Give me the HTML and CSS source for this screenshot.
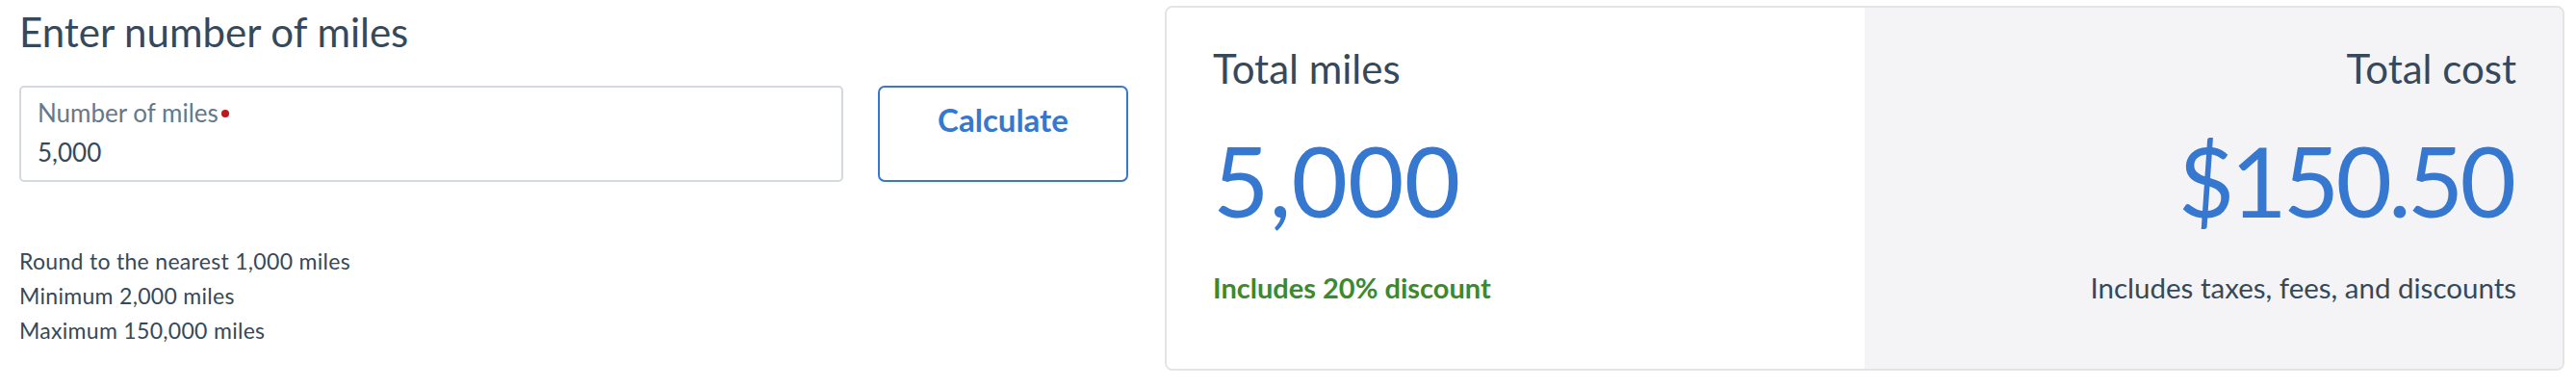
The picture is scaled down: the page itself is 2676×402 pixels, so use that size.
FILE: index.html
```html
<!DOCTYPE html>
<html lang="en">
<head>
<meta charset="utf-8">
<title>Buy miles</title>
<link rel="stylesheet" href="styles.css">
</head>
<body>
<div class="page">
  <section class="entry">
    <h2 class="entry-title">Enter number of miles</h2>
    <div class="entry-row">
      <label class="field">
        <span class="field-label">Number of miles<span class="req-dot"></span></span>
        <span class="field-value">5,000</span>
      </label>
      <button class="calc-btn" type="button">Calculate</button>
    </div>
    <ul class="hints">
      <li>Round to the nearest 1,000 miles</li>
      <li>Minimum 2,000 miles</li>
      <li>Maximum 150,000 miles</li>
    </ul>
  </section>
  <section class="summary">
    <div class="summary-half">
      <div class="summary-title">Total miles</div>
      <div class="summary-value">5,000</div>
      <div class="summary-note discount">Includes 20% discount</div>
    </div>
    <div class="summary-half cost">
      <div class="summary-title">Total cost</div>
      <div class="summary-value price">$150.50</div>
      <div class="summary-note">Includes taxes, fees, and discounts</div>
    </div>
  </section>
</div>
</body>
</html>
```

FILE: styles.css
```css
* { box-sizing: border-box; }
html, body { margin: 0; padding: 0; background: #ffffff; }
body { font-family: Lato, "Open Sans", sans-serif; color: #36495a; }

.page {
  display: flex;
  align-items: flex-start;
  gap: 38px;
  padding: 6px 12px 0 20px;
}

.entry { flex: 0 0 1152px; }

.entry-title {
  margin: 3px 0 32px;
  font-size: 42px;
  line-height: 48px;
  font-weight: 400;
  color: #36495a;
}

.entry-row {
  display: flex;
  gap: 36px;
}

.field {
  flex: 0 0 856px;
  height: 100px;
  border: 2px solid #d3d9df;
  border-radius: 5px;
  padding: 11px 17px 0;
  display: flex;
  flex-direction: column;
}

.field-label {
  font-size: 26px;
  line-height: 30px;
  color: #66798a;
}

.req-dot {
  display: inline-block;
  width: 8px;
  height: 8px;
  border-radius: 50%;
  background: #c0171e;
  margin-left: 3px;
  vertical-align: 5px;
}

.field-value {
  margin-top: 11px;
  font-size: 26px;
  line-height: 30px;
  color: #36495a;
}

.calc-btn {
  flex: 0 0 260px;
  height: 100px;
  border: 2px solid #3677cf;
  border-radius: 7px;
  background: #ffffff;
  padding: 13px 0 0;
  display: flex;
  justify-content: center;
  align-items: flex-start;
  font-family: Lato, "Open Sans", sans-serif;
  font-weight: 700;
  font-size: 33px;
  line-height: 40px;
  color: #3677cf;
}

.hints {
  list-style: none;
  margin: 64px 0 0;
  padding: 0;
  font-size: 23px;
  letter-spacing: 0.3px;
  line-height: 36px;
  color: #36495a;
}

.summary {
  flex: 1;
  display: grid;
  grid-template-columns: 1fr 1fr;
  border: 2px solid #e4e4e4;
  border-radius: 8px;
  overflow: hidden;
}

.summary-half {
  padding: 38px 48px 66px;
  background: #ffffff;
}

.summary-half.cost {
  background: #f4f4f6;
  text-align: right;
}

.summary-title {
  font-size: 42px;
  line-height: 50px;
  color: #36495a;
}

.summary-value {
  margin-top: 36px;
  font-size: 101px;
  line-height: 110px;
  color: #3677cf;
}

.summary-value.price {
  letter-spacing: -4px;
  margin-right: 4px;
}

.summary-note {
  margin-top: 39px;
  font-size: 29.5px;
  line-height: 36px;
  color: #36495a;
}

.summary-note.discount {
  font-size: 29px;
  font-weight: 700;
  color: #3b8a2e;
}
```
